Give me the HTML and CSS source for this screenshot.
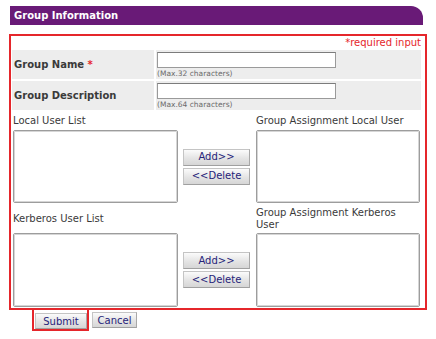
FILE: index.html
```html
<!DOCTYPE html>
<html lang="en">
<head>
    <meta charset="UTF-8">
    <title>Group Information</title>
    <link rel="stylesheet" href="styles.css">
</head>
<body>
    <div class="panel">
        <div class="panel-title">Group Information</div>

        <div class="form-box">
            <div class="required-note">*required input</div>

            <table class="info-table">
                <tr>
                    <th>Group Name <span class="star">*</span></th>
                    <td>
                        <input type="text" class="text-input">
                        <div class="hint">(Max.32 characters)</div>
                    </td>
                </tr>
                <tr>
                    <th>Group Description</th>
                    <td>
                        <input type="text" class="text-input">
                        <div class="hint">(Max.64 characters)</div>
                    </td>
                </tr>
            </table>

            <div class="user-grid">
                <div class="list-label">Local User List</div>
                <div></div>
                <div class="list-label">Group Assignment Local User</div>

                <select class="list-box" multiple></select>
                <div class="move-buttons">
                    <button class="btn move-btn">Add&gt;&gt;</button>
                    <button class="btn move-btn">&lt;&lt;Delete</button>
                </div>
                <select class="list-box" multiple></select>

                <div class="list-label second">Kerberos User List</div>
                <div></div>
                <div class="list-label second">Group Assignment Kerberos User</div>

                <select class="list-box tall" multiple></select>
                <div class="move-buttons">
                    <button class="btn move-btn">Add&gt;&gt;</button>
                    <button class="btn move-btn">&lt;&lt;Delete</button>
                </div>
                <select class="list-box tall" multiple></select>
            </div>
        </div>

        <div class="actions">
            <span class="submit-mark"><button class="btn action-btn">Submit</button></span>
            <button class="btn action-btn cancel-btn">Cancel</button>
        </div>
    </div>
</body>
</html>
```

FILE: styles.css
```css
:root {
    --purple: #691a77;
    --red: #e5262b;
    --row: #ededed;
    --text: #3a3a3a;
    --navy: #26237a;
}

body {
    margin: 0;
    background: #fff;
    font-family: 'DejaVu Sans', Verdana, sans-serif;
    font-size: 10px;
    color: var(--text);
}

.panel {
    padding: 6px 9px 0 9px;
    width: 418px;
}

.panel-title {
    margin-left: 1px;
    width: 409px;
    height: 19px;
    line-height: 20px;
    padding-left: 4px;
    background: var(--purple);
    color: #fff;
    font-weight: bold;
    border-top-right-radius: 12px;
}

.form-box {
    margin-top: 9px;
    border: 2px solid var(--red);
    padding: 0 0 0 1px;
}

.required-note {
    color: var(--red);
    text-align: right;
    padding-right: 4px;
    height: 12px;
    line-height: 12px;
    margin-top: 1px;
}

.info-table {
    border-spacing: 0 2px;
    margin-top: -1px;
    width: 409px;
}

.info-table th,
.info-table td {
    background: var(--row);
    padding: 0;
    height: 29px;
}

.info-table th {
    width: 140px;
    text-align: left;
    padding-left: 2px;
    border-right: 2px solid #fff;
}

.star {
    color: var(--red);
}

.info-table td {
    padding-left: 1px;
    vertical-align: top;
}

.text-input {
    display: block;
    box-sizing: border-box;
    width: 179px;
    height: 16px;
    margin: 2px 0 0 0;
    border: 1px solid #9a9a9a;
    border-top-color: #7c7c7c;
    background: #fff;
}

.hint {
    font-size: 7.5px;
    color: #6b6b6b;
    margin-top: 1px;
}

.user-grid {
    display: grid;
    grid-template-columns: 165px 67px 165px;
    column-gap: 5px;
    padding-left: 1px;
}

.user-grid > :nth-child(3n) {
    margin-left: 1px;
}

.list-label {
    height: 18px;
    display: flex;
    align-items: center;
    line-height: 12px;
}

.list-label.second {
    height: 26px;
    margin-top: 3px;
}

.list-box {
    box-sizing: border-box;
    height: 73px;
    margin: 0;
    border: 1px solid #9d9d9d;
    outline: 1px solid #d6d6d6;
    outline-offset: -2px;
    background: #fff;
}

.list-box.tall {
    height: 74px;
    margin: 1px 0 1px 0;
}

.user-grid > .list-box.tall:nth-child(3n) {
    margin-left: 1px;
}

.move-buttons {
    display: flex;
    flex-direction: column;
    justify-content: center;
    gap: 2px;
}

.btn {
    font-family: 'DejaVu Sans', Verdana, sans-serif;
    font-size: 10px;
    color: var(--navy);
    background: linear-gradient(#fbfbfb, #e4e4e4 55%, #d6d6d6);
    border: 1px solid #c4c4c4;
    border-right-color: #a8a8a8;
    border-bottom-color: #a0a0a0;
    padding: 0;
    margin: 0;
}

.move-btn {
    height: 17px;
    width: 67px;
    line-height: 14px;
}

.actions {
    display: flex;
    align-items: flex-start;
    gap: 3px;
    padding-left: 23px;
}

.submit-mark {
    border: 2px solid var(--red);
    border-top: none;
    padding: 3px 0 0 1px;
    display: flex;
}

.action-btn {
    height: 16px;
    line-height: 13px;
    width: 52px;
}

.cancel-btn {
    width: 45px;
    margin-top: 2px;
}
```
